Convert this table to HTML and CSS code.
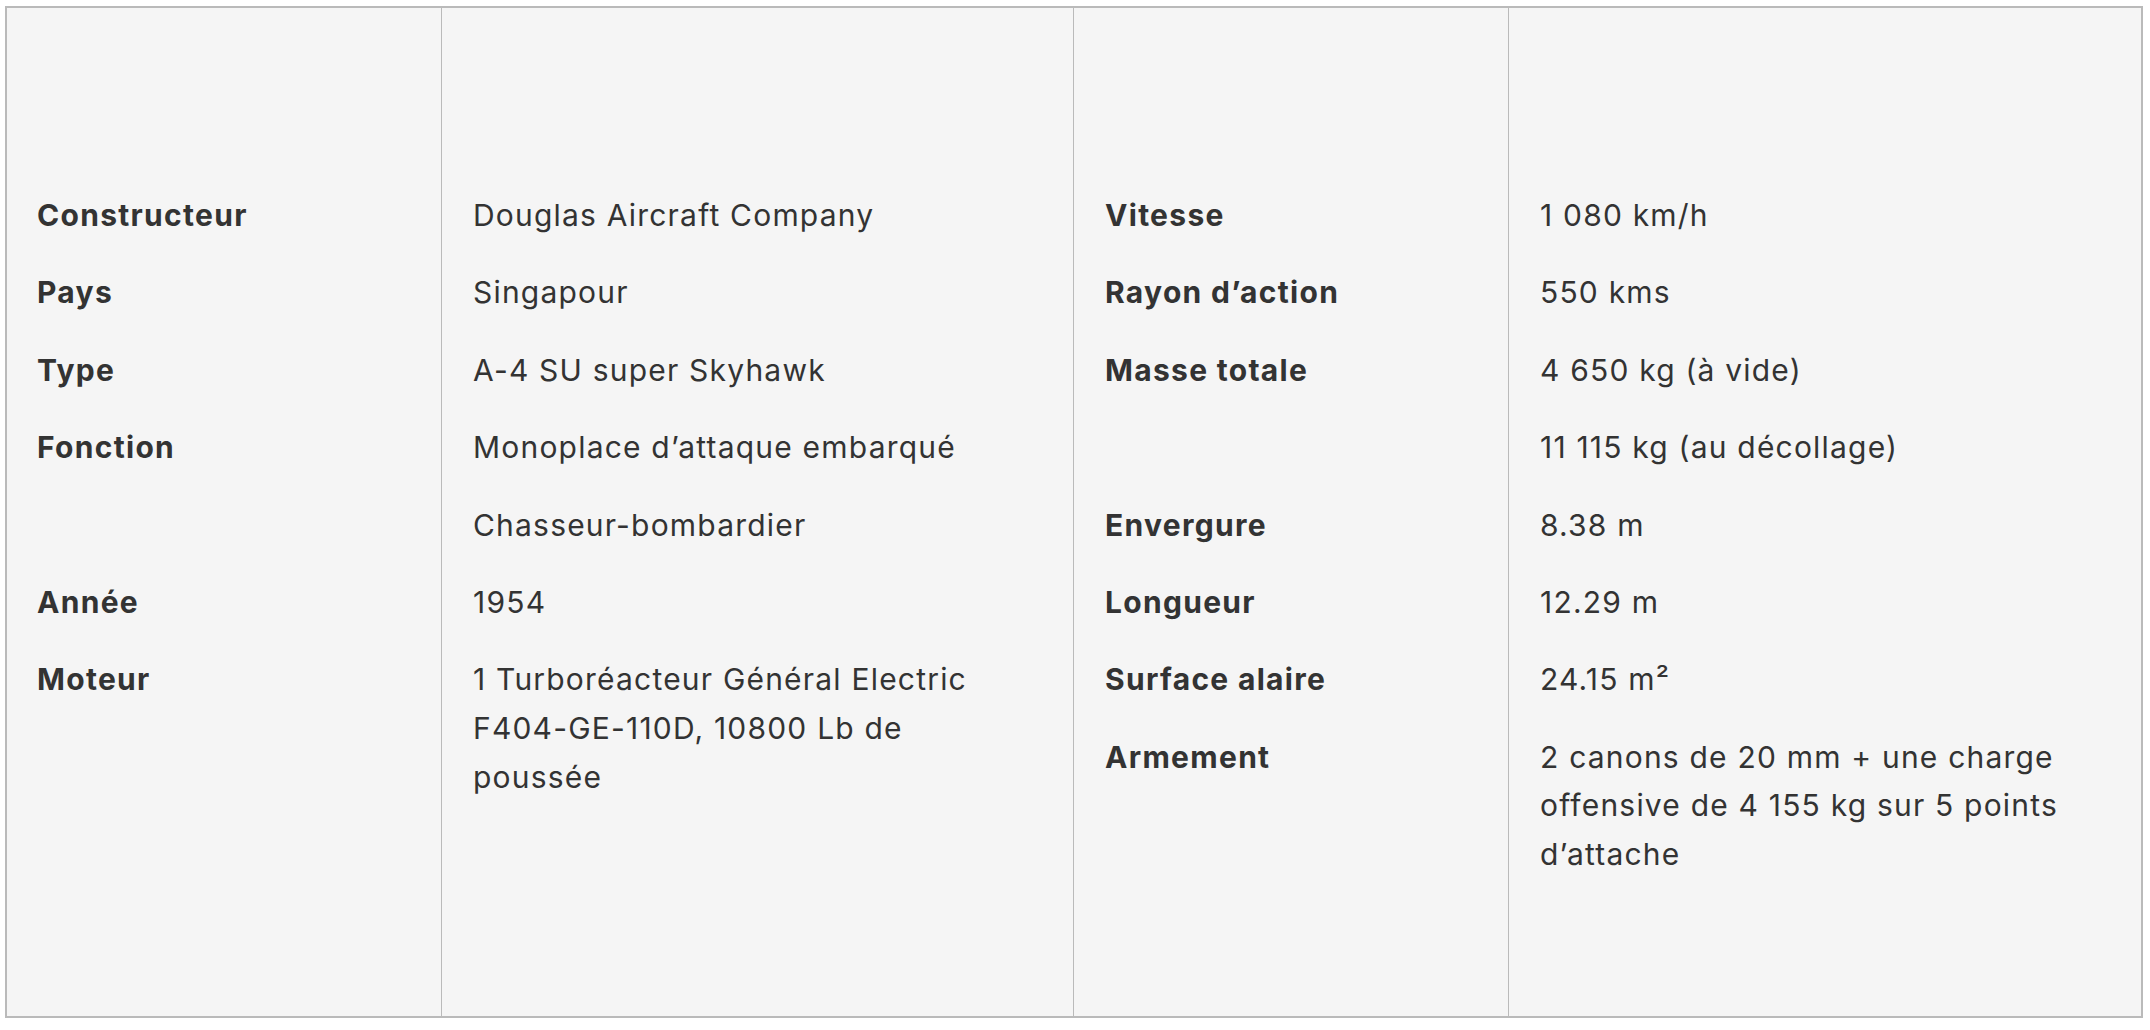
FILE: index.html
```html
<!DOCTYPE html>
<html lang="fr">
<head>
<meta charset="utf-8">
<title>Fiche technique</title>
<link rel="stylesheet" href="styles.css">
</head>
<body>
<div class="page">
  <div class="specs">
    <div class="cell">
      <p class="label">Constructeur</p>
      <p class="label">Pays</p>
      <p class="label">Type</p>
      <p class="label">Fonction</p>
      <p class="label empty">&nbsp;</p>
      <p class="label">Année</p>
      <p class="label">Moteur</p>
    </div>
    <div class="cell">
      <p>Douglas Aircraft Company</p>
      <p>Singapour</p>
      <p>A-4 SU super Skyhawk</p>
      <p>Monoplace d’attaque embarqué</p>
      <p>Chasseur-bombardier</p>
      <p>1954</p>
      <p>1 Turboréacteur Général Electric F404-GE-110D, 10800 Lb de poussée</p>
    </div>
    <div class="cell">
      <p class="label">Vitesse</p>
      <p class="label">Rayon d’action</p>
      <p class="label">Masse totale</p>
      <p class="label empty">&nbsp;</p>
      <p class="label">Envergure</p>
      <p class="label">Longueur</p>
      <p class="label">Surface alaire</p>
      <p class="label">Armement</p>
    </div>
    <div class="cell">
      <p>1 080 km/h</p>
      <p>550 kms</p>
      <p>4 650 kg (à vide)</p>
      <p>11 115 kg (au décollage)</p>
      <p>8.38 m</p>
      <p>12.29 m</p>
      <p>24.15 m²</p>
      <p>2 canons de 20 mm + une charge offensive de 4 155 kg sur 5 points d’attache</p>
    </div>
  </div>
</div>
</body>
</html>
```
FILE: styles.css
```css
html, body {
  margin: 0;
  padding: 0;
  background: #ffffff;
}

.page {
  padding: 6px 7px 0 5px;
}

.specs {
  box-sizing: border-box;
  height: 1012px;
  display: grid;
  grid-template-columns: 434px 632px 435px 1fr;
  border: 2px solid #bababa;
  background: #f5f5f5;
  font-family: Inter, "Noto Sans", sans-serif;
  font-size: 30px;
  letter-spacing: 1.2px;
  line-height: 48.6px;
  color: #333333;
}

.cell {
  padding: 183px 40px 0 31px;
  border-left: 1px solid #bababa;
}

.cell:first-child {
  padding-left: 30px;
  border-left: none;
}

.cell p {
  margin: 0 0 28.8px 0;
}

.label {
  font-weight: 700;
  letter-spacing: 1.3px;
}
```
